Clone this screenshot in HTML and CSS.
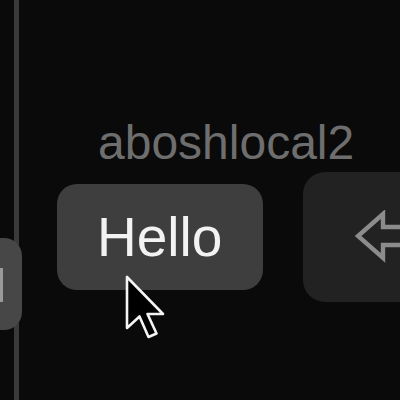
FILE: index.html
```html
<!DOCTYPE html>
<html>
<head>
<meta charset="utf-8">
<link rel="stylesheet" href="styles.css">
</head>
<body>
<div class="stage">
  <div class="divider"></div>
  <div class="key key-left"><span class="glyph-bit"></span></div>
  <div class="column">
    <div class="label">aboshlocal2</div>
    <div class="key key-hello">Hello</div>
  </div>
  <div class="key key-right">
    <svg class="back-icon" width="45" height="55" viewBox="0 0 45 55">
      <path d="M50 17 L28 17 L28 4 L3 26 L28 48 L28 35 L50 35" fill="none" stroke="#8c8c8c" stroke-width="4.4" stroke-linejoin="miter"/>
    </svg>
  </div>
  <svg class="cursor" width="44" height="68" viewBox="0 0 44 68">
    <path d="M2 2 L2 53 L14.5 41.5 L23.5 62 L31.5 58.5 L22.5 39 L38 39 Z" fill="#000" stroke="#f4f4f4" stroke-width="2.6" stroke-linejoin="round"/>
  </svg>
</div>
</body>
</html>
```
FILE: styles.css
```css
html, body {
  margin: 0;
  padding: 0;
  background: #0a0a0a;
}
body {
  width: 400px;
  height: 400px;
  overflow: hidden;
  font-family: "Liberation Sans", Arial, sans-serif;
}
.stage {
  position: relative;
  display: flex;
  align-items: flex-start;
  height: 400px;
  overflow: hidden;
}
.divider {
  flex-shrink: 0;
  width: 5px;
  height: 400px;
  margin-left: 14px;
  background: #3a3a3a;
}
.key {
  flex-shrink: 0;
  box-sizing: border-box;
}
.key-left {
  width: 22px;
  height: 92px;
  margin-left: -19px;
  margin-top: 238px;
  background: #474747;
  border-radius: 0 18px 18px 0;
  padding-top: 30px;
}
.glyph-bit {
  display: block;
  width: 3px;
  height: 34px;
  background: #9a9a9a;
}
.column {
  flex-shrink: 0;
  margin-left: 35px;
  margin-top: 119px;
  display: flex;
  flex-direction: column;
  gap: 17px;
  width: 206px;
}
.label {
  padding-left: 41px;
  font-size: 48px;
  line-height: 48px;
  color: #6e6e6e;
  white-space: nowrap;
}
.key-hello {
  width: 206px;
  height: 106px;
  background: #3e3e3e;
  border-radius: 20px;
  padding-left: 40px;
  padding-top: 26px;
  font-size: 55px;
  line-height: 55px;
  color: #f2f2f2;
}
.key-right {
  width: 97px;
  height: 130px;
  margin-left: 40px;
  margin-top: 172px;
  background: #222222;
  border-radius: 22px 0 0 22px;
  padding-left: 52px;
  padding-top: 38px;
  overflow: hidden;
}
.back-icon {
  display: block;
}
.cursor {
  position: absolute;
  left: 125px;
  top: 275px;
}
```
